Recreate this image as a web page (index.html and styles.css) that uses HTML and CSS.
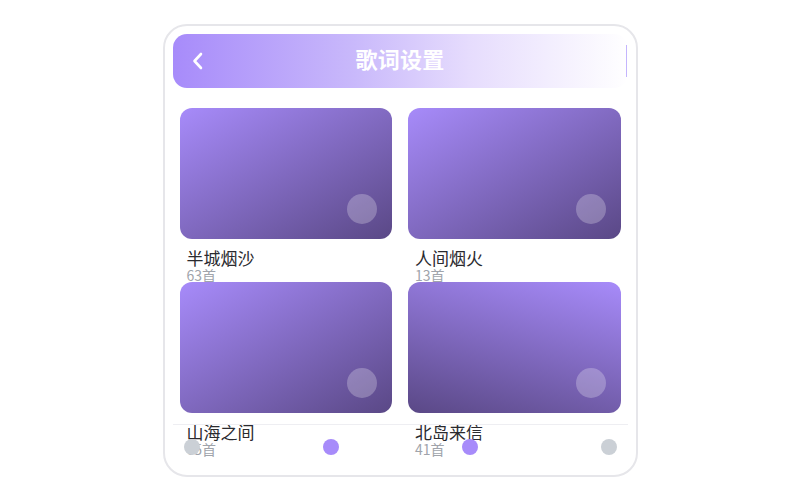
FILE: index.html
```html
<!DOCTYPE html>
<html lang="zh-CN">
<head>
<meta charset="UTF-8">
<title>歌词设置</title>
<link rel="stylesheet" href="styles.css">
</head>
<body>
<div class="phone">
  <div class="header">
    <span class="back">
      <svg width="14" height="18" viewBox="0 0 14 18"><path d="M10 2 L3.5 9 L10 16" fill="none" stroke="#fff" stroke-width="2.6" stroke-linecap="round" stroke-linejoin="round"/></svg>
    </span>
    <h1>歌词设置</h1>
  </div>

  <div class="content">
    <div class="grid">
      <div class="card">
        <div class="cover"><span class="play"></span></div>
        <div class="name">半城烟沙</div>
        <div class="count">63首</div>
      </div>
      <div class="card">
        <div class="cover"><span class="play"></span></div>
        <div class="name">人间烟火</div>
        <div class="count">13首</div>
      </div>
      <div class="card">
        <div class="cover"><span class="play"></span></div>
        <div class="name">山海之间</div>
        <div class="count">65首</div>
      </div>
      <div class="card">
        <div class="cover alt"><span class="play"></span></div>
        <div class="name">北岛来信</div>
        <div class="count">41首</div>
      </div>
    </div>
  </div>

  <div class="nav">
    <span class="dot"></span>
    <span class="dot on"></span>
    <span class="dot on"></span>
    <span class="dot"></span>
  </div>
</div>
</body>
</html>
```

FILE: styles.css
```css
body {
  margin: 0;
  background: #fff;
  font-family: "Noto Sans CJK SC", "Noto Sans", sans-serif;
}

.phone {
  width: 475px;
  height: 453px;
  box-sizing: border-box;
  margin: 24px auto 0;
  padding: 8px;
  border: 2px solid #e6e6ea;
  border-radius: 24px;
  background: #fff;
}

.header {
  height: 54px;
  border-radius: 14px;
  background: linear-gradient(90deg, #a78bfa 0%, #c9b9fb 40%, #e6dcfd 65%, #fff 100%);
  display: flex;
  align-items: center;
  justify-content: center;
  position: relative;
}

.header::after {
  content: "";
  position: absolute;
  right: 1px;
  top: 11px;
  bottom: 11px;
  width: 1px;
  background: #c4b5fd;
}

.back {
  position: absolute;
  left: 18px;
  top: 18px;
  display: flex;
}

h1 {
  margin: 0 0 6px;
  color: #fff;
  font-size: 22px;
  line-height: 30px;
  font-weight: 700;
  letter-spacing: 0.3px;
}

.content {
  height: 336px;
  box-sizing: border-box;
  padding: 20px 7px 0;
}

.grid {
  display: grid;
  grid-template-columns: 1fr 1fr;
  grid-auto-rows: 158px;
  gap: 16px;
}

.cover {
  height: 131px;
  border-radius: 12px;
  background: linear-gradient(150deg, #a78bfa, #5a4886);
  position: relative;
}

.cover.alt {
  background: linear-gradient(195deg, #a78bfa, #5a4886);
}

.play {
  position: absolute;
  right: 15px;
  bottom: 15px;
  width: 30px;
  height: 30px;
  border-radius: 50%;
  background: rgba(255,255,255,0.25);
}

.name {
  margin-top: 9px;
  padding-left: 7px;
  font-size: 17px;
  line-height: 20px;
  color: #2a2a2e;
}

.count {
  padding-left: 7px;
  font-size: 14px;
  line-height: 14px;
  color: #a0a4ab;
}

.nav {
  height: 43px;
  border-top: 1px solid #eeeef2;
  padding: 0 11px;
  display: flex;
  align-items: center;
  justify-content: space-between;
  position: relative;
}

.dot {
  width: 16px;
  height: 16px;
  border-radius: 50%;
  background: #cbd0d6;
}

.dot.on {
  background: #a78bfa;
}
```
